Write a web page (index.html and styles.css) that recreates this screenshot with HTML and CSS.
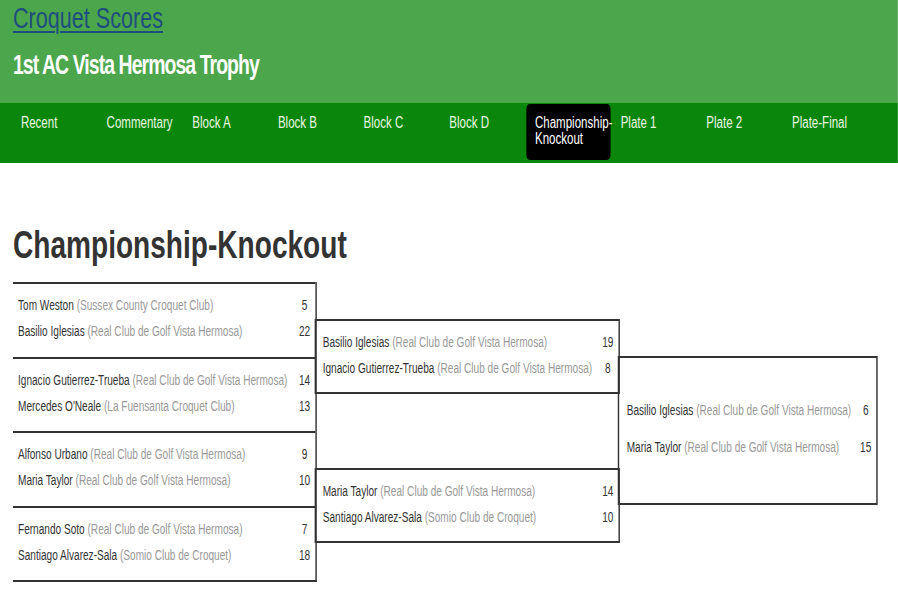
FILE: index.html
```html
<!DOCTYPE html>
<html lang="en">
<head>
    <meta charset="UTF-8">
    <meta name="viewport" content="width=device-width, initial-scale=1.0">
    <title>Croquet Scores - Championship-Knockout</title>
    <link rel="stylesheet" href="styles.css">
</head>
<body>
<div class="frame">
<div class="page">
    <!-- site header with event name -->
    <header class="siteHeader">
        <a class="siteName" href="#">Croquet Scores</a>
        <h2 class="eventName">1st AC Vista Hermosa Trophy</h2>
    </header>

    <!-- event sections -->
    <nav class="eventNav">
        <a href="#">Recent</a>
        <a href="#">Commentary</a>
        <a href="#">Block A</a>
        <a href="#">Block B</a>
        <a href="#">Block C</a>
        <a href="#">Block D</a>
        <a href="#" class="active">Championship-Knockout</a>
        <a href="#">Plate 1</a>
        <a href="#">Plate 2</a>
        <a href="#">Plate-Final</a>
    </nav>

    <main>
        <h1 class="pageTitle">Championship-Knockout</h1>

        <!-- knockout draw -->
        <section class="bracket">
            <div class="round roundOne">
                <div class="match">
                    <div class="player"><span class="name">Tom Weston <em>(Sussex County Croquet Club)</em></span><span class="score">5</span></div>
                    <div class="player"><span class="name">Basilio Iglesias <em>(Real Club de Golf Vista Hermosa)</em></span><span class="score">22</span></div>
                </div>
                <div class="match">
                    <div class="player"><span class="name">Ignacio Gutierrez-Trueba <em>(Real Club de Golf Vista Hermosa)</em></span><span class="score">14</span></div>
                    <div class="player"><span class="name">Mercedes O'Neale <em>(La Fuensanta Croquet Club)</em></span><span class="score">13</span></div>
                </div>
                <div class="match">
                    <div class="player"><span class="name">Alfonso Urbano <em>(Real Club de Golf Vista Hermosa)</em></span><span class="score">9</span></div>
                    <div class="player"><span class="name">Maria Taylor <em>(Real Club de Golf Vista Hermosa)</em></span><span class="score">10</span></div>
                </div>
                <div class="match">
                    <div class="player"><span class="name">Fernando Soto <em>(Real Club de Golf Vista Hermosa)</em></span><span class="score">7</span></div>
                    <div class="player"><span class="name">Santiago Alvarez-Sala <em>(Somio Club de Croquet)</em></span><span class="score">18</span></div>
                </div>
            </div>

            <div class="round roundTwo">
                <div class="slot">
                    <div class="match">
                        <div class="player"><span class="name">Basilio Iglesias <em>(Real Club de Golf Vista Hermosa)</em></span><span class="score">19</span></div>
                        <div class="player"><span class="name">Ignacio Gutierrez-Trueba <em>(Real Club de Golf Vista Hermosa)</em></span><span class="score">8</span></div>
                    </div>
                </div>
                <div class="slot">
                    <div class="match">
                        <div class="player"><span class="name">Maria Taylor <em>(Real Club de Golf Vista Hermosa)</em></span><span class="score">14</span></div>
                        <div class="player"><span class="name">Santiago Alvarez-Sala <em>(Somio Club de Croquet)</em></span><span class="score">10</span></div>
                    </div>
                </div>
            </div>

            <div class="round roundFinal">
                <div class="match">
                    <div class="player"><span class="name">Basilio Iglesias <em>(Real Club de Golf Vista Hermosa)</em></span><span class="score">6</span></div>
                    <div class="player"><span class="name">Maria Taylor <em>(Real Club de Golf Vista Hermosa)</em></span><span class="score">15</span></div>
                </div>
            </div>
        </section>
    </main>
</div>
</div>
</body>
</html>
```

FILE: styles.css
```css
* {
    padding: 0px;
    margin: 0px;
    box-sizing: border-box;
}
body {
    background-color: white;
    color: #333;
    font-family: "Liberation Sans", Arial, sans-serif;
}
/* the site is drawn with a narrow face, so the whole page is squeezed sideways */
.frame {
    width: 100%;
    overflow: hidden;
}
.page {
    width: 1247px;
    transform: scaleX(0.72);
    transform-origin: top left;
}

/* header */
.siteHeader {
    background-color: #4ca64c;
    height: 103px;
    padding: 0px 18px;
}
.siteName {
    display: inline-block;
    color: #1d4f7c;
    font-size: 30px;
    line-height: 36px;
    text-decoration: underline;
    text-decoration-thickness: 2px;
    text-underline-offset: 3px;
}
.eventName {
    color: white;
    font-size: 27px;
    letter-spacing: -1.3px;
    line-height: 32px;
    margin-top: 13px;
}

/* nav */
.eventNav {
    background-color: #0a870a;
    height: 60px;
    padding: 1px 0px 0px 17px;
    display: flex;
    gap: 2px;
}
.eventNav a {
    width: 117px;
    height: 56px;
    padding: 11px 0px 0px 12px;
    color: #eaf6e2;
    text-decoration: none;
    font-size: 16px;
    line-height: 16px;
}
.eventNav a.active {
    background-color: black;
    border-radius: 5px;
    color: white;
}

/* title */
main {
    padding: 60px 18px 20px 18px;
}
.pageTitle {
    font-size: 39px;
    line-height: 44px;
    color: #333;
    margin-bottom: 15px;
}

/* bracket */
.bracket {
    display: flex;
    align-items: flex-start;
}
.match {
    font-size: 14px;
    line-height: 26px;
}
.player {
    display: flex;
    justify-content: space-between;
}
.name {
    white-space: nowrap;
}
.name em {
    font-style: normal;
    color: #999;
}
.score {
    width: 30px;
    text-align: center;
}

.roundOne {
    width: 422px;
    border-right: 2.8px solid #333;
    border-bottom: 2px solid #333;
}
.roundOne .match {
    height: 74.5px;
    border-top: 2px solid #333;
    padding: 8px 0px 0px 7px;
}

.roundTwo {
    width: 424px;
    margin-left: -2.8px;
}
.roundTwo .slot {
    height: 149px;
    padding-top: 37px;
}
.roundTwo .match {
    height: 75px;
    border: 2px solid #333;
    border-left-width: 2.8px;
    border-right-width: 2.8px;
    padding: 8px 0px 0px 9px;
}

.roundFinal {
    width: 361px;
    margin-left: -2.8px;
    padding-top: 74px;
}
.roundFinal .match {
    height: 149px;
    border: 2px solid #333;
    border-left-width: 2.8px;
    border-right-width: 2.8px;
    padding: 0px 0px 4px 10px;
    line-height: 37px;
    display: flex;
    flex-direction: column;
    justify-content: center;
}
```
